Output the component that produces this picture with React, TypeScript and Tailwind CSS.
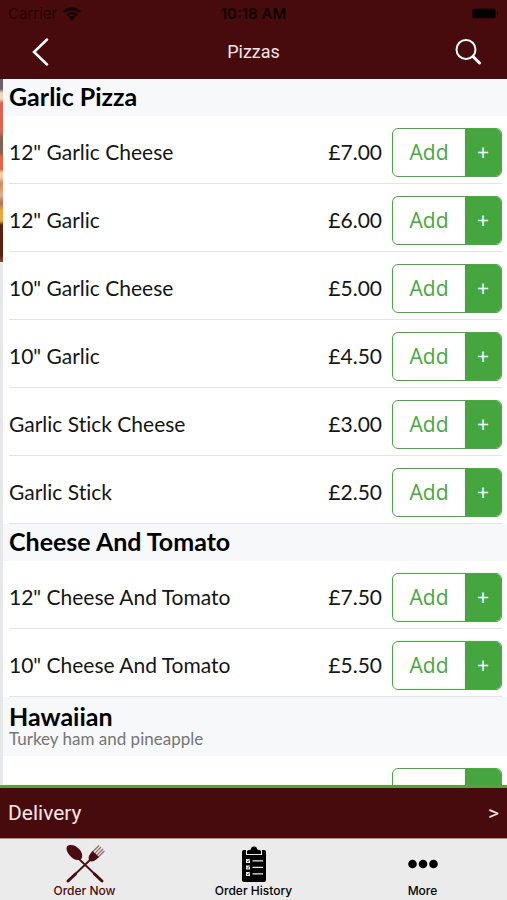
import { clsx } from 'clsx';

interface Item {
  name: string;
  price: string;
}

interface Section {
  title: string;
  note?: string;
  items: Item[];
}

const sections: Section[] = [
  {
    title: 'Garlic Pizza',
    items: [
      { name: '12" Garlic Cheese', price: '£7.00' },
      { name: '12" Garlic', price: '£6.00' },
      { name: '10" Garlic Cheese', price: '£5.00' },
      { name: '10" Garlic', price: '£4.50' },
      { name: 'Garlic Stick Cheese', price: '£3.00' },
      { name: 'Garlic Stick', price: '£2.50' },
    ],
  },
  {
    title: 'Cheese And Tomato',
    items: [
      { name: '12" Cheese And Tomato', price: '£7.50' },
      { name: '10" Cheese And Tomato', price: '£5.50' },
    ],
  },
  {
    title: 'Hawaiian',
    note: 'Turkey ham and pineapple',
    items: [{ name: '', price: '' }],
  },
];

function WifiIcon() {
  return (
    <svg width="18" height="14" viewBox="0 0 18 14" aria-hidden="true">
      <g fill="none" stroke="#100000" strokeWidth="2.6">
        <path d="M1 5.2a11.3 11.3 0 0 1 16 0" />
        <path d="M4 8.3a7.1 7.1 0 0 1 10 0" />
      </g>
      <path d="M9 13.4 5.9 10.2a4.4 4.4 0 0 1 6.2 0z" fill="#100000" />
    </svg>
  );
}

function CutleryIcon() {
  return (
    <svg width="40" height="40" viewBox="0 0 40 40" aria-hidden="true">
      <g fill="none" stroke="#4a0c0e" strokeLinecap="round">
        <path d="M14 15 37 37M25 16 3 37" strokeWidth="1.8" />
        <path d="M29.500 30 37 37M10.500 30 3 37" strokeWidth="3" />
      </g>
      <path d="M2 2.500c3-3 9.500-1 13 3.500 2.500 3.300 2.800 6.800 1.300 8.800s-6 1.700-9.500-1.300C2.600 10 .5 5 2 2.500z" fill="#4a0c0e" />
      <path d="M25.500 9.500c-2 2.500-2.500 5-1.200 6.800s4.200 1.500 7-.800l2.700-2.500-6.500-6z" fill="#4a0c0e" />
      <path d="M27 8.500 34 1.500M29 10.300 36 3M31 12 38 5M32.800 13.500 39.300 7" stroke="#4a0c0e" strokeOpacity=".6" strokeWidth="1.1" fill="none" />
    </svg>
  );
}

function ClipboardIcon() {
  return (
    <svg width="26" height="38" viewBox="0 0 26 38" aria-hidden="true">
      <rect x="1" y="5" width="24" height="32" rx="2" />
      <path d="M5.500 9.500V5.500L9.500 4a3.600 3.600 0 0 1 7 0l4 1.500v4z" stroke="#ebebeb" strokeWidth="1.200" />
      <path d="M6.500 8.500V5.800L10 4.500a3 3 0 0 1 6 0l3.500 1.300v2.700z" />
      <g fill="#ebebeb">
        <path d="M5 14h4v4H5zM5 20.500h4v4H5zM5 27h4v4H5z" />
        <path d="M11.500 15.300H22v1.200H11.500zM11.500 21.800H22v1.200H11.500zM11.500 28.300H22v1.200H11.500z" />
      </g>
      <path d="m6 16 1 1 1.500-2.500M6 22.500l1 1 1.500-2.500M6 29l1 1 1.500-2.500" fill="none" stroke="#000" strokeWidth=".6" />
    </svg>
  );
}

function DotsIcon() {
  return (
    <svg width="30" height="10" viewBox="0 0 30 10" aria-hidden="true">
      <circle cx="4.500" cy="5" r="4.300" />
      <circle cx="15" cy="5" r="4.300" />
      <circle cx="25.500" cy="5" r="4.300" />
    </svg>
  );
}

function StatusBar() {
  return (
    <div className="grid h-7 grid-cols-3 items-center px-2 text-[15px] text-[#100000]">
      <span className="flex items-center gap-1.5 text-[#2a0203]">
        Carrier <WifiIcon />
      </span>
      <span className="text-center font-semibold">10:18 AM</span>
      <svg className="justify-self-end" width="28" height="12" viewBox="0 0 28 12" aria-hidden="true">
        <rect x="1" y="0.500" width="24" height="10" rx="2.500" fill="#250304" />
        <rect x="2" y="1.500" width="22" height="8" rx="1.500" fill="#000" />
        <rect x="26" y="4" width="1" height="3" fill="#250304" />
      </svg>
    </div>
  );
}

function MenuRow({ item }: { item: Item }) {
  return (
    <li className="mr-[5px] ml-1.5 flex h-[68px] items-start border-b border-[#e3e4e6] pt-3">
      <span className="flex h-12 flex-1 items-center text-[21px] [font-variant-ligatures:none]">{item.name}</span>
      <span className="flex h-12 items-center pr-2.5 text-[21px]">{item.price}</span>
      <button
        type="button"
        aria-label={`Add ${item.name}`}
        className="flex h-[49px] w-[110px] overflow-hidden rounded-md border border-[#48a842] font-['Open_Sans',sans-serif]"
      >
        <span className="flex h-full flex-1 items-center justify-center text-[21px] text-[#48a842]">
          {item.name && 'Add'}
        </span>
        <span className="flex h-full w-9 items-center justify-center bg-[#45a63f] text-[21px] text-white">
          {item.name && '+'}
        </span>
      </button>
    </li>
  );
}

function MenuSection({ section }: { section: Section }) {
  return (
    <section>
      <header className={clsx('bg-[#f6f8fa] pl-1.5', section.note ? 'h-[59px] pt-1' : 'h-[37px] pt-0.5')}>
        <h2 className="text-[25px] leading-[30px] font-bold text-black">{section.title}</h2>
        {section.note && <p className="text-[17px] leading-4 text-[#757575]">{section.note}</p>}
      </header>
      <ul>
        {section.items.map((item) => (
          <MenuRow key={item.name} item={item} />
        ))}
      </ul>
    </section>
  );
}

export default function App() {
  return (
    <div className="flex h-screen flex-col bg-white font-[Inter,sans-serif] text-[#151515]">
      <header className="h-[79px] bg-[#480b0d]">
        <StatusBar />
        <div className="grid h-12 grid-cols-3 items-center px-6 text-[#f5e6e4]">
          <button type="button" aria-label="Back" className="justify-self-start px-2">
            <svg width="17" height="28" viewBox="0 0 17 28" fill="none" stroke="#fff" strokeWidth="2.500" strokeLinecap="round">
              <path d="M15 1.500 2 14l13 12.500" />
            </svg>
          </button>
          <h1 className="text-center font-[Roboto,sans-serif] text-lg">Pizzas</h1>
          <button type="button" aria-label="Search" className="justify-self-end">
            <svg width="28" height="28" viewBox="0 0 28 28" fill="none" stroke="#fff" strokeLinecap="round">
              <circle cx="11" cy="11.500" r="9.500" strokeWidth="2" />
              <path d="m18 18.500 6.500 6.500" strokeWidth="3" />
            </svg>
          </button>
        </div>
      </header>

      <div className="flex min-h-0 flex-1">
        {/* edge of the photo on the screen underneath */}
        <div className="w-[3px] shrink-0 bg-[#e6e7e9]">
          <div className="h-[183px] bg-[linear-gradient(#6b6270_0_10px,#f0d9b8_14px_20px,#e0614f_24px_54px,#84624f_58px_74px,#e8633f_78px_90px,#f3cfae_94px_98px,#d88a5a_104px,#e8a98a_116px,#b8705a_124px,#efa73c_132px_142px,#5e1f10_146px_176px,#8a4a2c_183px)]" />
        </div>
        <main className="flex-1 overflow-y-auto font-[Lato,sans-serif] [scrollbar-width:none]">
          {sections.map((section) => (
            <MenuSection key={section.title} section={section} />
          ))}
        </main>
      </div>

      <button
        type="button"
        className="flex h-[54px] items-center justify-between border-t-3 border-b border-t-[#5f9d45] border-b-[#b08a8b] bg-[#480b0d] px-2 pt-0.5 font-[Roboto,sans-serif] text-[21px] text-[#f5e6e4]"
      >
        <span>Delivery</span>
        <span>&gt;</span>
      </button>

      <nav className="grid h-[61px] grid-cols-3 bg-[#ebebeb] text-xs leading-3 font-medium text-black">
        <a href="#order" className="flex flex-col items-center text-[#4a0c0e]">
          <span className="flex h-[46px] items-center pt-1"><CutleryIcon /></span>
          Order Now
        </a>
        <a href="#history" className="flex flex-col items-center">
          <span className="flex h-[46px] items-center pt-1"><ClipboardIcon /></span>
          Order History
        </a>
        <a href="#more" className="flex flex-col items-center">
          <span className="flex h-[46px] items-center pt-1"><DotsIcon /></span>
          More
        </a>
      </nav>
    </div>
  );
}
